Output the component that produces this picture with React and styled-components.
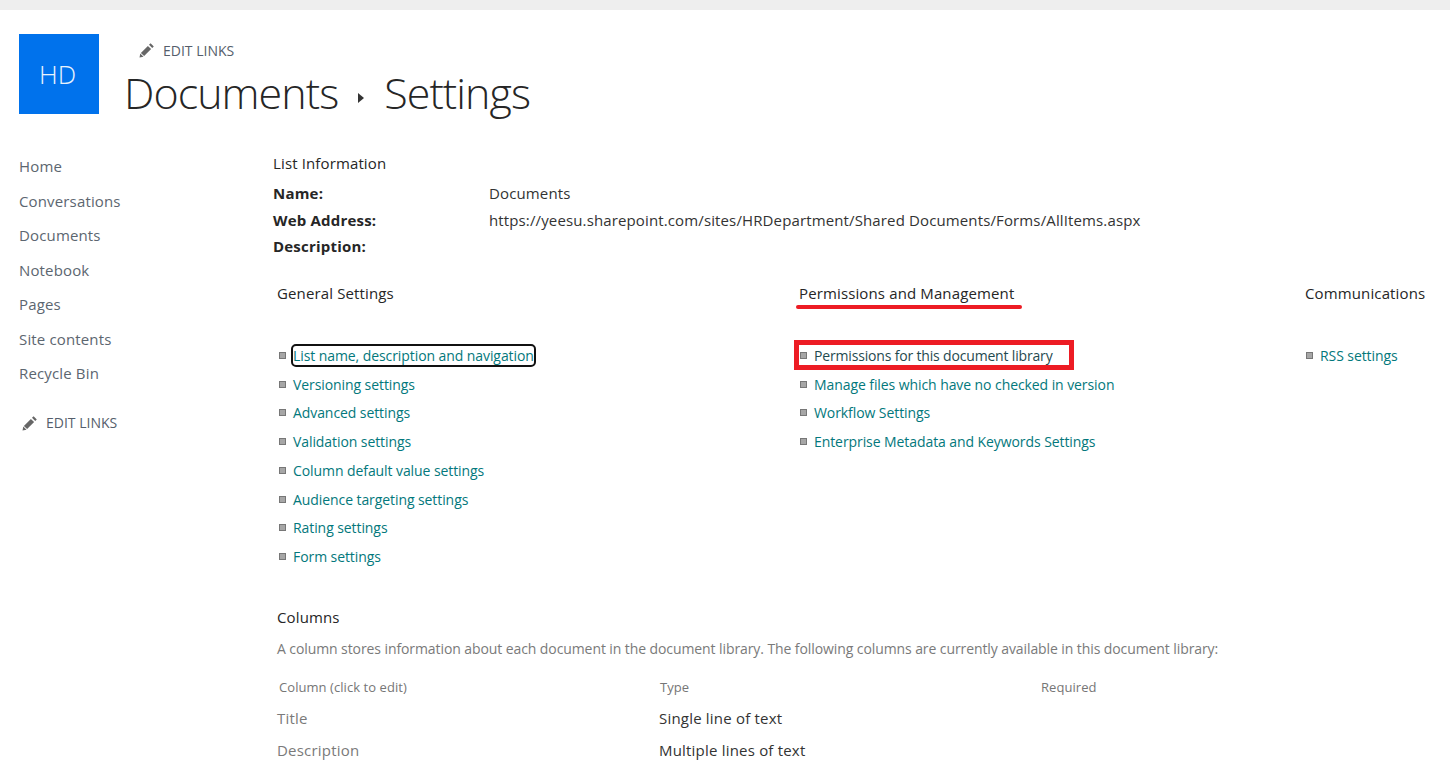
import styled, { createGlobalStyle } from "styled-components";

const GlobalStyle = createGlobalStyle`
  html, body {
    margin: 0;
    padding: 0;
    height: 763px;
    overflow: hidden;
    background: #fff;
    font-family: "Open Sans", "Noto Sans", Arial, sans-serif;
  }
`;

const TopBar = styled.div`
  height: 10px;
  background: #eeeeee;
`;

const Header = styled.header`
  display: flex;
  padding: 24px 0 0 19px;
  height: 110px;
  box-sizing: border-box;
`;

const Logo = styled.div`
  width: 80px;
  height: 80px;
  padding-right: 3px;
  box-sizing: border-box;
  background: #0072ec;
  color: #e8f2fd;
  display: flex;
  align-items: center;
  justify-content: center;
  font-size: 26px;
  font-weight: 300;
`;

const TitleBlock = styled.div`
  margin-left: 25px;
`;

const EditLinks = styled.div`
  display: flex;
  align-items: center;
  gap: 8px;
  height: 32px;
  padding-left: ${(p) => p.$indent || 0}px;
  color: #555e6b;
  font-size: 14px;
  letter-spacing: 0;
`;

const Title = styled.h1`
  display: flex;
  align-items: center;
  margin: 0;
  font-size: 43px;
  line-height: 53px;
  font-weight: 300;
  color: #262626;
  letter-spacing: -0.95px;
`;

const Caret = styled.span`
  width: 0;
  height: 0;
  margin: 11px 20px 0 20px;
  border-left: 6px solid #333;
  border-top: 5.5px solid transparent;
  border-bottom: 5.5px solid transparent;
`;

const Body = styled.div`
  display: flex;
  padding-top: 13px;
`;

const Nav = styled.nav`
  width: 273px;
  flex-shrink: 0;
  padding: 16px 0 0 19px;
  box-sizing: border-box;
`;

const NavItem = styled.div`
  height: 34.5px;
  line-height: 34.5px;
  font-size: 15px;
  color: #5c6670;
  letter-spacing: 0.15px;
`;

const NavEdit = styled.div`
  margin-top: 16px;
  margin-left: 3px;
`;

const Main = styled.main`
  flex: 1;
  min-width: 0;
`;

const ListInfo = styled.section`
  padding-top: 20px;
`;

const SectionTitle = styled.div`
  font-size: 15px;
  line-height: 20px;
  color: #262626;
  letter-spacing: 0.13px;
`;

const InfoRows = styled.div`
  margin-top: 7px;
`;

const InfoRow = styled.div`
  display: grid;
  grid-template-columns: 216px 1fr;
  height: 26.5px;
  line-height: 26.5px;
  font-size: 15px;
  color: #333;
  letter-spacing: 0.13px;
`;

const InfoLabel = styled.span`
  font-weight: 700;
  color: #262626;
  letter-spacing: 0.2px;
`;

const SettingsGrid = styled.section`
  display: grid;
  grid-template-columns: 522px 506px 1fr;
  margin-top: 23px;
  padding-left: 4px;
`;

const HeadingWrap = styled.div`
  position: relative;
  height: 58.5px;
`;

const Underline = styled.span`
  position: absolute;
  left: -3px;
  top: 22px;
  width: 226px;
  height: 4px;
  border-radius: 2px;
  background: #ed1c24;
`;

const LinkList = styled.ul`
  list-style: none;
  margin: 0;
  padding: 0 0 0 ${(p) => p.$indent || 0}px;
`;

const LinkRow = styled.li`
  position: relative;
  display: flex;
  align-items: center;
  height: 28.75px;
  font-size: 14px;
  color: ${(p) => (p.$dark ? "#1f4a4f" : "#03787c")};
  letter-spacing: ${(p) => (p.$dark ? "-0.17px" : "-0.08px")};
`;

const Bullet = styled.span`
  width: 5px;
  height: 5px;
  margin: 0 7px 0 0;
  flex-shrink: 0;
  background: #a6a6a6;
  border: 1px solid #777;
`;

const FocusLink = styled.span`
  outline: 2px solid #111;
  border-radius: 3px;
  line-height: 19px;
`;

const RedBox = styled.span`
  position: absolute;
  left: -6px;
  top: -1px;
  width: 270px;
  height: 20px;
  border: 5px solid #ed1c24;
  pointer-events: none;
`;

const ColumnsSection = styled.section`
  margin-top: 36px;
  padding-left: 4px;
`;

const Description = styled.p`
  margin: 12px 0 0;
  font-size: 14px;
  line-height: 20px;
  color: #7a7a7a;
  letter-spacing: -0.09px;
`;

const ColumnsHead = styled.div`
  display: grid;
  grid-template-columns: 381px 381px 1fr;
  margin: 19px 0 6px;
  padding-left: 2px;
  font-size: 13px;
  line-height: 18px;
  color: #767676;
  letter-spacing: 0.06px;
`;

const ColumnsRow = styled.div`
  display: grid;
  grid-template-columns: 382px 381px 1fr;
  height: 32px;
  line-height: 32px;
  font-size: 15px;
  letter-spacing: 0.2px;
  color: #333;
`;

const ColumnName = styled.span`
  color: #7a7a7a;
`;

const PencilIcon = () => (
  <svg width="16" height="16" viewBox="0 0 16 16" aria-hidden="true">
    <path fill="#666" d="M11.6 1.2l3.2 3.2-1.6 1.6-3.2-3.2zM8.9 3.9l3.2 3.2-7 7-3.2-3.2zM1.3 11.5l3.2 3.2-4 .9z" />
  </svg>
);

const navItems = ["Home", "Conversations", "Documents", "Notebook", "Pages", "Site contents", "Recycle Bin"];
const general = [
  "Versioning settings",
  "Advanced settings",
  "Validation settings",
  "Column default value settings",
  "Audience targeting settings",
  "Rating settings",
  "Form settings",
];
const permissions = [
  "Manage files which have no checked in version",
  "Workflow Settings",
  "Enterprise Metadata and Keywords Settings",
];

function SettingLink({ children }) {
  return (
    <LinkRow>
      <Bullet />
      <span>{children}</span>
    </LinkRow>
  );
}

export default function App() {
  return (
    <>
      <GlobalStyle />
      <TopBar />
      <Header>
        <Logo>HD</Logo>
        <TitleBlock>
          <EditLinks $indent={15}>
            <PencilIcon />
            EDIT LINKS
          </EditLinks>
          <Title>
            Documents
            <Caret />
            Settings
          </Title>
        </TitleBlock>
      </Header>
      <Body>
        <Nav>
          {navItems.map((item) => (
            <NavItem key={item}>{item}</NavItem>
          ))}
          <NavEdit>
            <EditLinks>
              <PencilIcon />
              EDIT LINKS
            </EditLinks>
          </NavEdit>
        </Nav>
        <Main>
          <ListInfo>
            <SectionTitle>List Information</SectionTitle>
            <InfoRows>
              <InfoRow>
                <InfoLabel>Name:</InfoLabel>
                <span>Documents</span>
              </InfoRow>
              <InfoRow>
                <InfoLabel>Web Address:</InfoLabel>
                <span>https://yeesu.sharepoint.com/sites/HRDepartment/Shared Documents/Forms/AllItems.aspx</span>
              </InfoRow>
              <InfoRow>
                <InfoLabel>Description:</InfoLabel>
              </InfoRow>
            </InfoRows>
          </ListInfo>
          <SettingsGrid>
            <div>
              <HeadingWrap>
                <SectionTitle>General Settings</SectionTitle>
              </HeadingWrap>
              <LinkList $indent={2}>
                <LinkRow>
                  <Bullet />
                  <FocusLink>List name, description and navigation</FocusLink>
                </LinkRow>
                {general.map((item) => (
                  <SettingLink key={item}>{item}</SettingLink>
                ))}
              </LinkList>
            </div>
            <div>
              <HeadingWrap>
                <SectionTitle>Permissions and Management</SectionTitle>
                <Underline />
              </HeadingWrap>
              <LinkList $indent={1}>
                <LinkRow $dark>
                  <Bullet />
                  <span>Permissions for this document library</span>
                  <RedBox />
                </LinkRow>
                {permissions.map((item) => (
                  <SettingLink key={item}>{item}</SettingLink>
                ))}
              </LinkList>
            </div>
            <div>
              <HeadingWrap>
                <SectionTitle>Communications</SectionTitle>
              </HeadingWrap>
              <LinkList $indent={1}>
                <SettingLink>RSS settings</SettingLink>
              </LinkList>
            </div>
          </SettingsGrid>
          <ColumnsSection>
            <SectionTitle>Columns</SectionTitle>
            <Description>
              A column stores information about each document in the document library. The following columns are currently available in this document library:
            </Description>
            <ColumnsHead>
              <span>Column (click to edit)</span>
              <span>Type</span>
              <span>Required</span>
            </ColumnsHead>
            <ColumnsRow>
              <ColumnName>Title</ColumnName>
              <span>Single line of text</span>
            </ColumnsRow>
            <ColumnsRow>
              <ColumnName>Description</ColumnName>
              <span>Multiple lines of text</span>
            </ColumnsRow>
          </ColumnsSection>
        </Main>
      </Body>
    </>
  );
}
